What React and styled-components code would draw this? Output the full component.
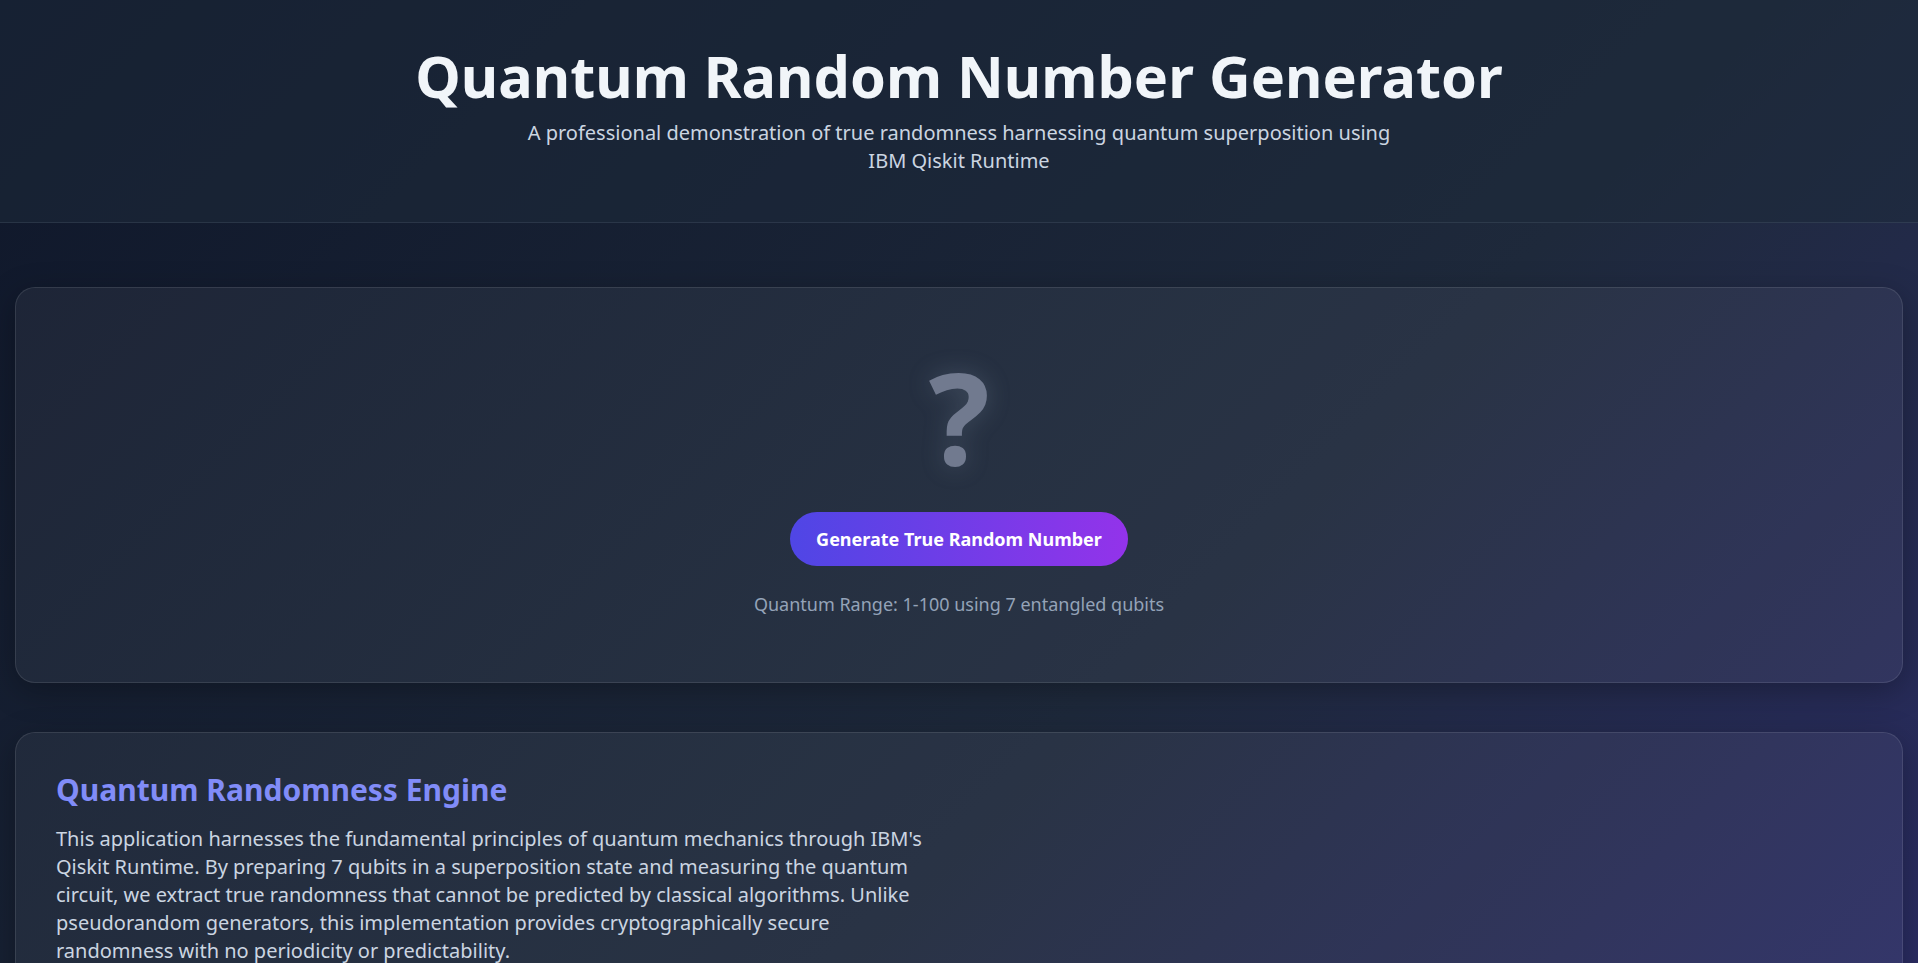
import React from 'react';
import styled, { createGlobalStyle } from 'styled-components';

const GlobalStyle = createGlobalStyle`
  * {
    box-sizing: border-box;
  }

  html, body {
    margin: 0;
    padding: 0;
  }

  body {
    font-family: 'Noto Sans', 'Open Sans', sans-serif;
    color: #f8fafc;
    background: linear-gradient(135deg, #0f172a 0%, #1e293b 62%, #2a2c62 100%);
    background-attachment: fixed;
    min-height: 100vh;
    overflow-x: hidden;
  }

  body::-webkit-scrollbar {
    display: none;
  }
`;

const PageContainer = styled.div`
  display: flex;
  flex-direction: column;
  width: 100%;
  min-height: 100vh;
`;

const Header = styled.header`
  display: flex;
  flex-direction: column;
  align-items: center;
  text-align: center;
  padding: 36px 20px 47px;
  background: rgba(30, 41, 59, 0.55);
  border-bottom: 1px solid rgba(148, 163, 184, 0.14);
`;

const Title = styled.h1`
  margin: 0 0 4px;
  font-size: 57.6px;
  font-weight: 700;
  line-height: 79px;
  color: #f1f5f9;
`;

const Subtitle = styled.p`
  margin: 0;
  max-width: 880px;
  font-size: 20px;
  line-height: 28px;
  color: #cbd5e1;
`;

const Main = styled.main`
  display: flex;
  flex-direction: column;
  gap: 49px;
  padding: 64px 15px 40px;
`;

const Card = styled.section`
  background: rgba(255, 255, 255, 0.05);
  border: 1px solid rgba(255, 255, 255, 0.1);
  border-radius: 20px;
  box-shadow: 0 8px 32px rgba(0, 0, 0, 0.28);
  padding: ${({ $padding }) => $padding || '40px'};
`;

const GeneratorBody = styled.div`
  display: flex;
  flex-direction: column;
  align-items: center;
`;

const NumberDisplay = styled.div`
  font-size: 128px;
  font-weight: 700;
  line-height: 128px;
  color: #717a8f;
  text-shadow: 0 0 24px rgba(148, 163, 184, 0.25);
  margin-bottom: 32px;
`;

const GenerateButton = styled.button`
  font-family: inherit;
  font-size: 18px;
  font-weight: 700;
  line-height: 22px;
  color: #ffffff;
  border: none;
  border-radius: 999px;
  padding: 16px 26px;
  background: linear-gradient(90deg, #4f46e5 0%, #9333ea 100%);
  cursor: pointer;
  margin-bottom: 25px;
`;

const RangeNote = styled.p`
  margin: 0;
  font-size: 18px;
  line-height: 27px;
  color: #94a3b8;
`;

const InfoGrid = styled.div`
  display: grid;
  grid-template-columns: 1fr 1fr;
  gap: 72px;
`;

const InfoColumn = styled.div`
  display: flex;
  flex-direction: column;
`;

const InfoHeading = styled.h2`
  margin: 0 0 18px;
  font-size: 30px;
  font-weight: 700;
  line-height: 34px;
  color: #818cf8;
`;

const InfoText = styled.p`
  margin: 0;
  font-size: 20px;
  line-height: 28px;
  color: #cbd5e1;
`;

function App() {
  return (
    <PageContainer>
      <GlobalStyle />
      <Header>
        <Title>Quantum Random Number Generator</Title>
        <Subtitle>
          A professional demonstration of true randomness harnessing quantum superposition using IBM Qiskit Runtime
        </Subtitle>
      </Header>

      <Main>
        <Card $padding="64px 40px">
          <GeneratorBody>
            <NumberDisplay>?</NumberDisplay>
            <GenerateButton>Generate True Random Number</GenerateButton>
            <RangeNote>Quantum Range: 1-100 using 7 entangled qubits</RangeNote>
          </GeneratorBody>
        </Card>

        <Card>
          <InfoGrid>
            <InfoColumn>
              <InfoHeading>Quantum Randomness Engine</InfoHeading>
              <InfoText>
                This application harnesses the fundamental principles of quantum mechanics through IBM's
                Qiskit Runtime. By preparing 7 qubits in a superposition state and measuring the quantum
                circuit, we extract true randomness that cannot be predicted by classical algorithms. Unlike
                pseudorandom generators, this implementation provides cryptographically secure randomness
                with no periodicity or predictability.
              </InfoText>
            </InfoColumn>
            <InfoColumn />
          </InfoGrid>
        </Card>
      </Main>
    </PageContainer>
  );
}

export default App;
